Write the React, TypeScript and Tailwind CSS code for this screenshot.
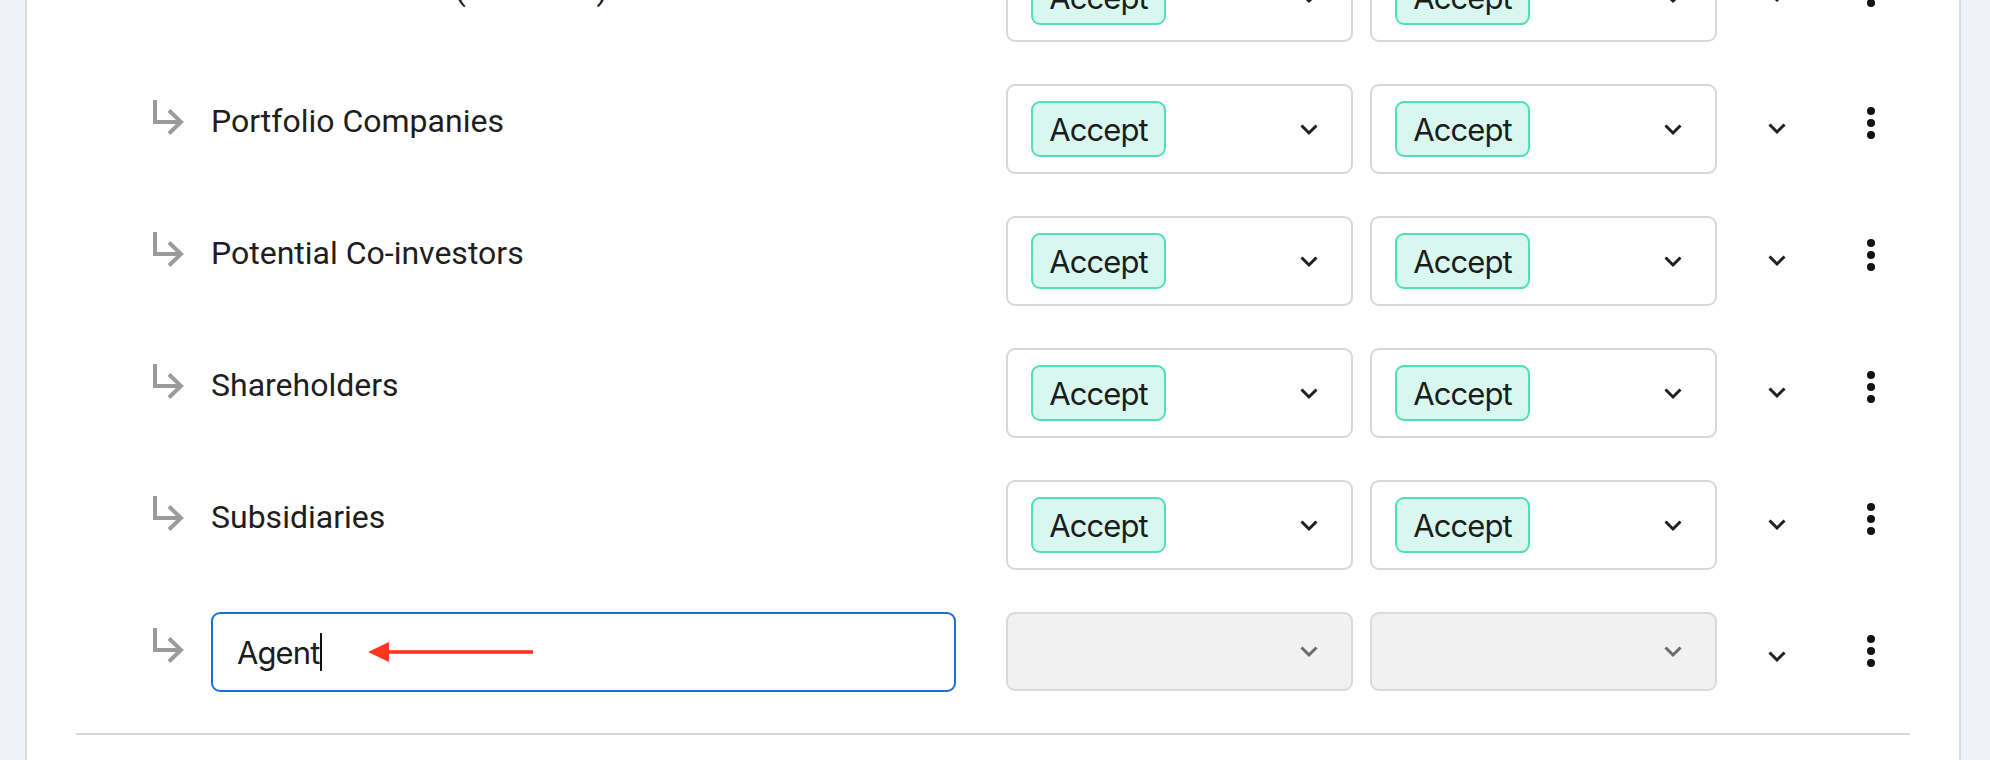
import React from "react";

function Chevron({ color = "#1f1f1f" }: { color?: string }) {
  return (
    <svg width="20" height="13" viewBox="0 0 20 13" fill="none">
      <path d="M2.5 2.5 L10 10 L17.5 2.5" stroke={color} strokeWidth="3" strokeLinejoin="miter" />
    </svg>
  );
}

function SubArrow() {
  return (
    <svg width="31" height="34" viewBox="0 0 31 34" fill="none" className="overflow-visible">
      <path d="M2 0 V22 H28" stroke="#9b9b9b" strokeWidth="4" />
      <path d="M16 10.5 L28 22 L16 33.5" stroke="#9b9b9b" strokeWidth="4" />
    </svg>
  );
}

function Kebab() {
  return (
    <div className="flex w-[40px] flex-col items-center gap-[4px] mt-[23px]">
      <span className="block h-[8px] w-[8px] rounded-full bg-[#111]" />
      <span className="block h-[8px] w-[8px] rounded-full bg-[#111]" />
      <span className="block h-[8px] w-[8px] rounded-full bg-[#111]" />
    </div>
  );
}

function AcceptSelect() {
  return (
    <div className="flex h-[90px] w-[347px] shrink-0 items-center justify-between rounded-[9px] border-2 border-[#d8d8d8] bg-white pl-[23px] pr-[32px]">
      <div className="flex h-[56px] w-[135px] items-center justify-center rounded-[9px] border-2 border-[#4ee0b6] bg-[#d8f8ef]">
        <span className="font-['Inter',sans-serif] text-[31px] leading-none text-[#1c1c1c] tracking-[-0.9px]">Accept</span>
      </div>
      <Chevron />
    </div>
  );
}

function DisabledSelect() {
  return (
    <div className="flex h-[79px] w-[347px] shrink-0 items-center justify-end rounded-[9px] border-2 border-[#dadada] bg-[#f1f1f1] pr-[32px]">
      <Chevron color="#6b6b6b" />
    </div>
  );
}

function RowTail() {
  return (
    <>
      <div className="ml-[40px] mt-[32px] flex h-[24px] w-[40px] items-center justify-center">
        <Chevron />
      </div>
      <div className="ml-[54px]">
        <Kebab />
      </div>
    </>
  );
}

function Row({ label, arrow = true }: { label: string; arrow?: boolean }) {
  return (
    <div className="flex h-[132px] shrink-0 items-start">
      <div className="ml-[77px] mt-[16px] w-[31px] shrink-0">{arrow ? <SubArrow /> : null}</div>
      <div className="ml-[27px] mt-[17px] w-[745px] shrink-0 font-['Roboto',sans-serif] text-[32px] leading-[40px] text-[#1e1e1e] whitespace-nowrap">
        {label}
      </div>
      <div className="ml-[50px]">
        <AcceptSelect />
      </div>
      <div className="ml-[17px]">
        <AcceptSelect />
      </div>
      <RowTail />
    </div>
  );
}

function AgentRow() {
  return (
    <div className="flex h-[80px] shrink-0 items-start">
      <div className="ml-[77px] mt-[16px] w-[31px] shrink-0">
        <SubArrow />
      </div>
      <div className="relative ml-[27px] flex h-[80px] w-[745px] shrink-0 items-center rounded-[9px] border-2 border-[#1b6fd7] bg-white pl-[24px]">
        <span className="font-['Inter',sans-serif] text-[31px] leading-none text-[#1c1c1c] tracking-[-0.9px]">Agent</span>
        <span className="ml-[1px] block h-[38px] w-[2px] bg-[#111]" />
        <svg
          className="absolute left-[155px] top-[27px]"
          width="166"
          height="22"
          viewBox="0 0 166 22"
        >
          <polygon points="0,11 21,1 21,21" fill="#ff3520" />
          <rect x="19" y="9.2" width="146" height="3.6" fill="#ff3520" />
        </svg>
      </div>
      <div className="ml-[50px]">
        <DisabledSelect />
      </div>
      <div className="ml-[17px]">
        <DisabledSelect />
      </div>
      <RowTail />
    </div>
  );
}

export default function App() {
  return (
    <div className="h-[760px] w-[1990px] overflow-hidden bg-[#eff3f8] pl-[25px] pr-[29px]">
      <div className="h-full overflow-hidden border-x-2 border-[#d9dce0] bg-white">
        <div className="-mt-[48px] flex flex-col px-[49px]">
          <Row label="Limited Partners (Investors)" arrow={false} />
          <Row label="Portfolio Companies" />
          <Row label="Potential Co-investors" />
          <Row label="Shareholders" />
          <Row label="Subsidiaries" />
          <AgentRow />
          <div className="mt-[41px] h-[2px] bg-[#d8d8d8]" />
        </div>
      </div>
    </div>
  );
}
